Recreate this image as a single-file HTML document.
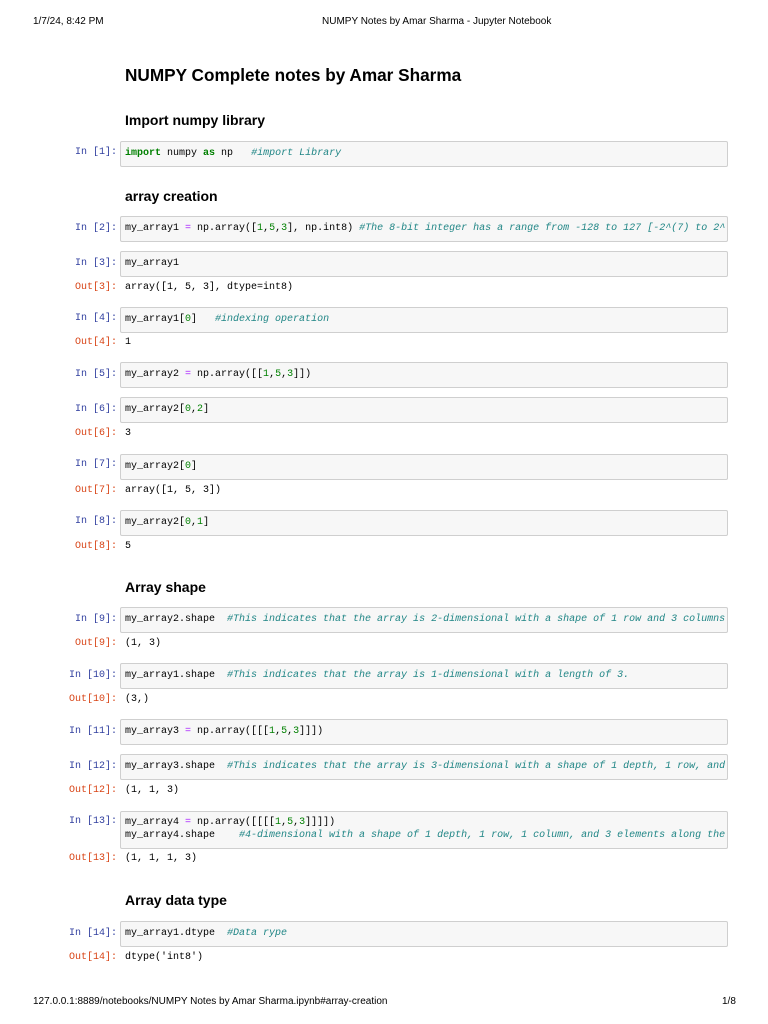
<!DOCTYPE html>
<html><head><meta charset="utf-8"><style>
body{margin:0;width:768px;height:1024px;background:#fff;position:relative;overflow:hidden;font-family:"Liberation Sans",sans-serif;color:#000}
.a{position:absolute;white-space:pre}
.hd{font-size:10px;top:16px}
h1,h2{position:absolute;margin:0;left:125px;font-weight:bold;white-space:nowrap}
h1{font-size:17.2px;top:65px}
h2{font-size:14px}
.box{position:absolute;left:120px;width:606px;border:1px solid #cfcfcf;border-radius:2px;background:#f7f7f7;overflow:hidden}
.c{font-family:"Liberation Mono",monospace;font-size:10px;line-height:13px}
.in{color:#303f9f;position:absolute;right:651px;font-family:"Liberation Mono",monospace;font-size:10px;white-space:pre}
.out{color:#d84315;position:absolute;right:651px;font-family:"Liberation Mono",monospace;font-size:10px;white-space:pre}
.code{position:absolute;left:4px;top:5px;white-space:pre}
.o{position:absolute;left:125px;white-space:pre}
.k{color:#008000;font-weight:bold}.n{color:#008000}.p{color:#aa22ff}.m{color:#1f8585;font-style:italic}
</style></head><body>
<div class="a hd" style="left:33px">1/7/24, 8:42 PM</div>
<div class="a hd" style="left:322px">NUMPY Notes by Amar Sharma - Jupyter Notebook</div>
<h1>NUMPY Complete notes by Amar Sharma</h1>
<h2 style="top:112px">Import numpy library</h2>
<div class="in c" style="top:146px">In [1]:</div>
<div class="box c" style="top:141px;height:24px"><div class="code"><span class="k">import</span> numpy <span class="k">as</span> np   <span class="m">#import Library</span></div></div>
<h2 style="top:188px">array creation</h2>
<div class="in c" style="top:222px">In [2]:</div>
<div class="box c" style="top:216px;height:24px"><div class="code">my_array1 <span class="p">=</span> np.array([<span class="n">1</span>,<span class="n">5</span>,<span class="n">3</span>], np.int8) <span class="m">#The 8-bit integer has a range from -128 to 127 [-2^(7) to 2^</span></div></div>
<div class="in c" style="top:257px">In [3]:</div>
<div class="box c" style="top:251px;height:24px"><div class="code">my_array1</div></div>
<div class="out c" style="top:281px">Out[3]:</div><div class="o c" style="top:281px">array([1, 5, 3], dtype=int8)</div>
<div class="in c" style="top:312px">In [4]:</div>
<div class="box c" style="top:307px;height:24px"><div class="code">my_array1[<span class="n">0</span>]   <span class="m">#indexing operation</span></div></div>
<div class="out c" style="top:336px">Out[4]:</div><div class="o c" style="top:336px">1</div>
<div class="in c" style="top:368px">In [5]:</div>
<div class="box c" style="top:362px;height:24px"><div class="code">my_array2 <span class="p">=</span> np.array([[<span class="n">1</span>,<span class="n">5</span>,<span class="n">3</span>]])</div></div>
<div class="in c" style="top:403px">In [6]:</div>
<div class="box c" style="top:397px;height:24px"><div class="code">my_array2[<span class="n">0</span>,<span class="n">2</span>]</div></div>
<div class="out c" style="top:427px">Out[6]:</div><div class="o c" style="top:427px">3</div>
<div class="in c" style="top:458px">In [7]:</div>
<div class="box c" style="top:454px;height:24px"><div class="code">my_array2[<span class="n">0</span>]</div></div>
<div class="out c" style="top:484px">Out[7]:</div><div class="o c" style="top:484px">array([1, 5, 3])</div>
<div class="in c" style="top:515px">In [8]:</div>
<div class="box c" style="top:510px;height:24px"><div class="code">my_array2[<span class="n">0</span>,<span class="n">1</span>]</div></div>
<div class="out c" style="top:540px">Out[8]:</div><div class="o c" style="top:540px">5</div>
<h2 style="top:579px">Array shape</h2>
<div class="in c" style="top:613px">In [9]:</div>
<div class="box c" style="top:607px;height:24px"><div class="code">my_array2.shape  <span class="m">#This indicates that the array is 2-dimensional with a shape of 1 row and 3 columns</span></div></div>
<div class="out c" style="top:637px">Out[9]:</div><div class="o c" style="top:637px">(1, 3)</div>
<div class="in c" style="top:669px">In [10]:</div>
<div class="box c" style="top:663px;height:24px"><div class="code">my_array1.shape  <span class="m">#This indicates that the array is 1-dimensional with a length of 3.</span></div></div>
<div class="out c" style="top:693px">Out[10]:</div><div class="o c" style="top:693px">(3,)</div>
<div class="in c" style="top:725px">In [11]:</div>
<div class="box c" style="top:719px;height:24px"><div class="code">my_array3 <span class="p">=</span> np.array([[[<span class="n">1</span>,<span class="n">5</span>,<span class="n">3</span>]]])</div></div>
<div class="in c" style="top:760px">In [12]:</div>
<div class="box c" style="top:754px;height:24px"><div class="code">my_array3.shape  <span class="m">#This indicates that the array is 3-dimensional with a shape of 1 depth, 1 row, and</span></div></div>
<div class="out c" style="top:784px">Out[12]:</div><div class="o c" style="top:784px">(1, 1, 3)</div>
<div class="in c" style="top:815px">In [13]:</div>
<div class="box c" style="top:811px;height:36px"><div class="code" style="top:4px">my_array4 <span class="p">=</span> np.array([[[[<span class="n">1</span>,<span class="n">5</span>,<span class="n">3</span>]]]])
my_array4.shape    <span class="m">#4-dimensional with a shape of 1 depth, 1 row, 1 column, and 3 elements along the</span></div></div>
<div class="out c" style="top:852px">Out[13]:</div><div class="o c" style="top:852px">(1, 1, 1, 3)</div>
<h2 style="top:892px">Array data type</h2>
<div class="in c" style="top:927px">In [14]:</div>
<div class="box c" style="top:921px;height:24px"><div class="code">my_array1.dtype  <span class="m">#Data rype</span></div></div>
<div class="out c" style="top:951px">Out[14]:</div><div class="o c" style="top:951px">dtype('int8')</div>
<div class="a hd" style="left:33px;top:996px">127.0.0.1:8889/notebooks/NUMPY Notes by Amar Sharma.ipynb#array-creation</div>
<div class="a hd" style="left:722px;top:996px">1/8</div>
</body></html>
